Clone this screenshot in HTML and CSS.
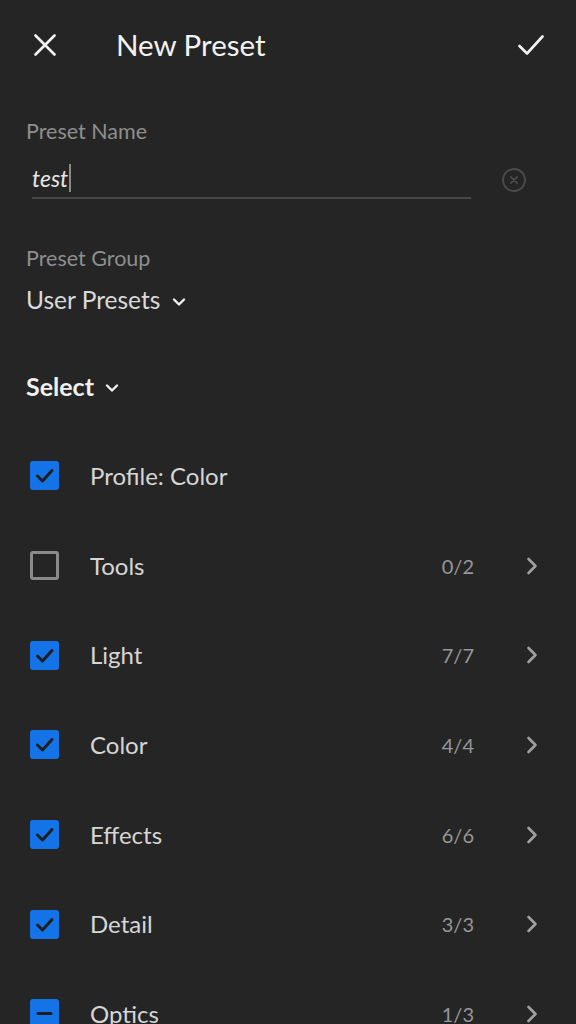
FILE: index.html
```html
<!DOCTYPE html>
<html lang="en">
<head>
<meta charset="utf-8">
<title>New Preset</title>
<link rel="stylesheet" href="styles.css">
</head>
<body>
<div class="screen">
  <header class="topbar">
    <span class="icon close">
      <svg width="22" height="22" viewBox="0 0 22 22"><path d="M1.5 1.5 L20.5 20.5 M20.5 1.5 L1.5 20.5" stroke="#f2f2f2" stroke-width="2.6" stroke-linecap="round" fill="none"/></svg>
    </span>
    <h1 class="title">New Preset</h1>
    <span class="icon confirm">
      <svg width="26" height="22" viewBox="0 0 26 22"><path d="M1.5 12 L9 19.5 L24.5 2.5" stroke="#f2f2f2" stroke-width="2.6" stroke-linecap="round" stroke-linejoin="round" fill="none"/></svg>
    </span>
  </header>

  <section class="form">
    <div class="label label-name">Preset Name</div>
    <div class="input-row">
      <div class="input"><span class="value">test</span><span class="caret"></span></div>
      <span class="clear">
        <svg width="26" height="26" viewBox="0 0 26 26"><circle cx="13" cy="13" r="11" stroke="#4b4b4b" stroke-width="1.8" fill="none"/><path d="M9.8 9.8 L16.2 16.2 M16.2 9.8 L9.8 16.2" stroke="#4b4b4b" stroke-width="1.8" stroke-linecap="round"/></svg>
      </span>
    </div>

    <div class="label label-group">Preset Group</div>
    <div class="dropdown group-value">User Presets
      <svg class="caret-down" width="14" height="10" viewBox="0 0 14 10"><path d="M2 2.5 L7 7.5 L12 2.5" stroke="#f0f0f0" stroke-width="2.4" stroke-linecap="round" stroke-linejoin="round" fill="none"/></svg>
    </div>

    <div class="dropdown select">Select
      <svg class="caret-down" width="14" height="10" viewBox="0 0 14 10"><path d="M2 2.5 L7 7.5 L12 2.5" stroke="#f0f0f0" stroke-width="2.4" stroke-linecap="round" stroke-linejoin="round" fill="none"/></svg>
    </div>
  </section>

  <ul class="list">
    <li class="row">
      <span class="box checked"><svg width="29" height="29" viewBox="0 0 29 29"><path d="M7.5 15 L12.5 20 L22 9.5" stroke="#1e1e1e" stroke-width="3" stroke-linecap="round" stroke-linejoin="round" fill="none"/></svg></span>
      <span class="name">Profile: Color</span>
    </li>
    <li class="row">
      <span class="box"></span>
      <span class="name">Tools</span>
      <span class="count">0/2</span>
      <svg class="chev" width="12" height="18" viewBox="0 0 12 18"><path d="M2.5 2 L9.5 9 L2.5 16" stroke="#a0a0a0" stroke-width="2.6" stroke-linecap="round" stroke-linejoin="round" fill="none"/></svg>
    </li>
    <li class="row">
      <span class="box checked"><svg width="29" height="29" viewBox="0 0 29 29"><path d="M7.5 15 L12.5 20 L22 9.5" stroke="#1e1e1e" stroke-width="3" stroke-linecap="round" stroke-linejoin="round" fill="none"/></svg></span>
      <span class="name">Light</span>
      <span class="count">7/7</span>
      <svg class="chev" width="12" height="18" viewBox="0 0 12 18"><path d="M2.5 2 L9.5 9 L2.5 16" stroke="#a0a0a0" stroke-width="2.6" stroke-linecap="round" stroke-linejoin="round" fill="none"/></svg>
    </li>
    <li class="row">
      <span class="box checked"><svg width="29" height="29" viewBox="0 0 29 29"><path d="M7.5 15 L12.5 20 L22 9.5" stroke="#1e1e1e" stroke-width="3" stroke-linecap="round" stroke-linejoin="round" fill="none"/></svg></span>
      <span class="name">Color</span>
      <span class="count">4/4</span>
      <svg class="chev" width="12" height="18" viewBox="0 0 12 18"><path d="M2.5 2 L9.5 9 L2.5 16" stroke="#a0a0a0" stroke-width="2.6" stroke-linecap="round" stroke-linejoin="round" fill="none"/></svg>
    </li>
    <li class="row">
      <span class="box checked"><svg width="29" height="29" viewBox="0 0 29 29"><path d="M7.5 15 L12.5 20 L22 9.5" stroke="#1e1e1e" stroke-width="3" stroke-linecap="round" stroke-linejoin="round" fill="none"/></svg></span>
      <span class="name">Effects</span>
      <span class="count">6/6</span>
      <svg class="chev" width="12" height="18" viewBox="0 0 12 18"><path d="M2.5 2 L9.5 9 L2.5 16" stroke="#a0a0a0" stroke-width="2.6" stroke-linecap="round" stroke-linejoin="round" fill="none"/></svg>
    </li>
    <li class="row">
      <span class="box checked"><svg width="29" height="29" viewBox="0 0 29 29"><path d="M7.5 15 L12.5 20 L22 9.5" stroke="#1e1e1e" stroke-width="3" stroke-linecap="round" stroke-linejoin="round" fill="none"/></svg></span>
      <span class="name">Detail</span>
      <span class="count">3/3</span>
      <svg class="chev" width="12" height="18" viewBox="0 0 12 18"><path d="M2.5 2 L9.5 9 L2.5 16" stroke="#a0a0a0" stroke-width="2.6" stroke-linecap="round" stroke-linejoin="round" fill="none"/></svg>
    </li>
    <li class="row">
      <span class="box checked"><svg width="29" height="29" viewBox="0 0 29 29"><path d="M8 14.5 L21 14.5" stroke="#1e1e1e" stroke-width="3" stroke-linecap="round" fill="none"/></svg></span>
      <span class="name">Optics</span>
      <span class="count">1/3</span>
      <svg class="chev" width="12" height="18" viewBox="0 0 12 18"><path d="M2.5 2 L9.5 9 L2.5 16" stroke="#a0a0a0" stroke-width="2.6" stroke-linecap="round" stroke-linejoin="round" fill="none"/></svg>
    </li>
  </ul>
</div>
</body>
</html>
```

FILE: styles.css
```css
html, body {
  margin: 0;
  padding: 0;
  background: #252525;
}

body {
  font-family: Lato, "Open Sans", "Liberation Sans", sans-serif;
  color: #dcdcdc;
  width: 576px;
  height: 1024px;
  overflow: hidden;
}

.screen {
  display: flex;
  flex-direction: column;
}

.topbar {
  display: flex;
  align-items: center;
  height: 90px;
  padding: 0 32px 0 34px;
}

.icon {
  display: flex;
  align-items: center;
}

.title {
  margin: 0 0 0 60px;
  font-size: 29.5px;
  font-weight: 400;
  color: #f2f2f2;
  line-height: 34px;
}

.confirm {
  margin-left: auto;
}

.form {
  padding: 0 26px;
  display: flex;
  flex-direction: column;
}

.label {
  font-size: 21.5px;
  line-height: 30px;
  color: #8e8e8e;
}

.label-name {
  margin-top: 26px;
}

.input-row {
  display: flex;
  align-items: flex-end;
}

.input {
  width: 439px;
  margin-left: 6px;
  padding: 17px 0 4px;
  border-bottom: 2px solid #474747;
  display: flex;
  align-items: center;
  height: 30px;
}

.value {
  font-style: italic;
  font-size: 23px;
  line-height: 30px;
  color: #e6e6e6;
}

.caret {
  width: 1.5px;
  height: 28px;
  background: #8a8a8a;
  margin-left: 1px;
}

.clear {
  display: flex;
  margin-left: 30px;
  margin-bottom: 6px;
}

.label-group {
  margin-top: 44px;
}

.dropdown {
  display: flex;
  align-items: center;
  line-height: 34px;
}

.group-value {
  margin-top: 10px;
  font-size: 24.5px;
  color: #dadada;
}

.caret-down {
  margin-left: 12px;
  margin-top: 3px;
}

.select {
  margin-top: 52px;
  font-size: 25px;
  font-weight: 700;
  color: #f0f0f0;
}

.select .caret-down {
  margin-left: 11px;
}

.list {
  list-style: none;
  margin: 28px 0 0;
  padding: 0 38px 0 30px;
}

.row {
  display: flex;
  align-items: center;
  height: 89.7px;
}

.box {
  width: 29px;
  height: 29px;
  box-sizing: border-box;
  border: 3px solid #8a8a8a;
  border-radius: 3px;
  flex-shrink: 0;
  display: flex;
}

.box.checked {
  border: none;
  background: #1473e6;
}

.name {
  margin-left: 31px;
  font-size: 24px;
  color: #d6d6d6;
  line-height: 30px;
}

.count {
  margin-left: auto;
  font-size: 20px;
  color: #979797;
  line-height: 30px;
}

.chev {
  margin-left: 52px;
}
```
